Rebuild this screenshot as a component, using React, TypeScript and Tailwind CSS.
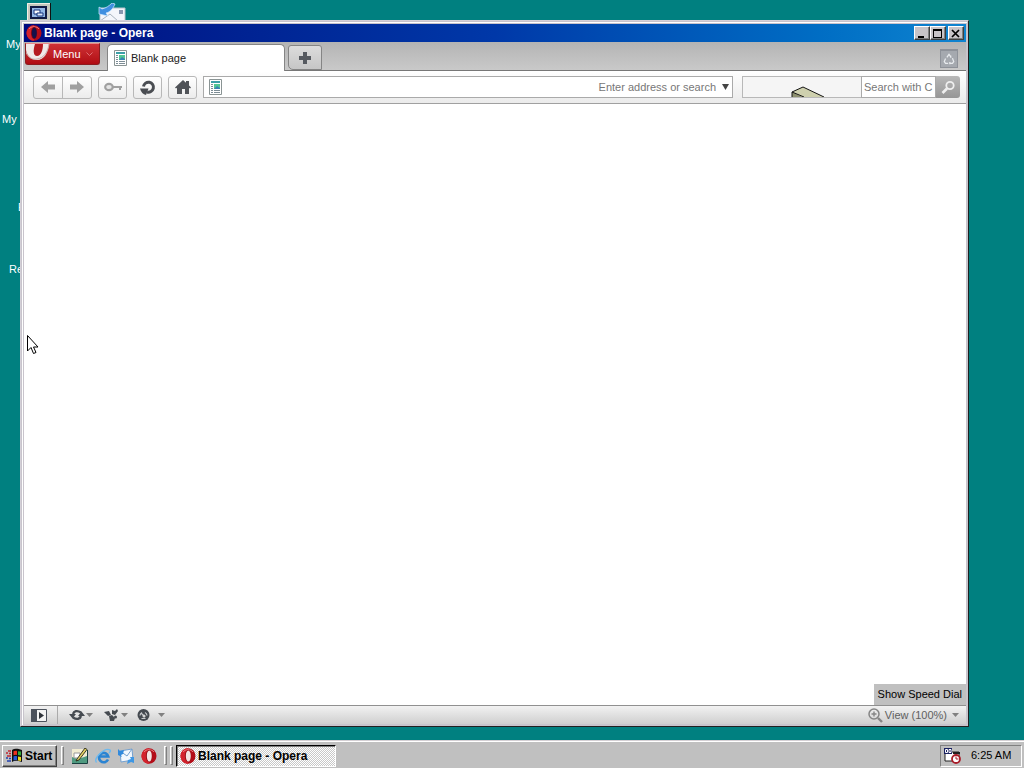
const raised = 'border border-t-white border-l-white border-r-[#404040] border-b-[#404040] shadow-[inset_-1px_-1px_0_#808080]';
const navButton = 'flex h-[23px] w-[29px] items-center justify-center rounded-[3px] border border-[#b8b8b8] bg-linear-to-b from-white to-[#ececec]';

function OperaIcon({ hole = '#f4e4e2' }: { hole?: string }) {
  return (
    <svg width="16" height="16" viewBox="0 0 16 16" className="shrink-0" aria-hidden="true">
      <ellipse cx="8" cy="8" rx="7.500" ry="7.800" fill="#b30d18" />
      <path d="M8 .2C3.900.2.5 3.700.5 8s3.400 7.800 7.500 7.800V.2z" fill="#d3222c" />
      <path d="M3 4c2-3 8-3 10 0" fill="none" stroke="#e8797c" />
      <ellipse cx="8" cy="8" rx="3.100" ry="6" fill="#8d0710" />
      <ellipse cx="8.300" cy="8" rx="2.500" ry="5.600" fill={hole} />
    </svg>
  );
}

function PageIcon() {
  return (
    <svg width="13" height="16" viewBox="0 0 13 16" className="shrink-0" aria-hidden="true">
      <path d="M.5.5h12v15H.5z" fill="#fff" stroke="#8a9494" />
      <path d="M2 2h9v2H2z" fill="#3c9fa8" />
      <path d="M5 5h6v5H5z" fill="#52c795" />
      <path d="M5 10l3-3 3 2v1z" fill="#3984b4" />
      <path d="M2 5.500h2M2 7.500h2M2 9.500h2M2 11.500h2M2 13.500h2M5 11.500h6M5 13.500h6" stroke="#7d8d96" />
    </svg>
  );
}

function Caret({ className = 'text-[#808080]' }: { className?: string }) {
  return (
    <svg width="7" height="4" viewBox="0 0 7 4" className={`shrink-0 ${className}`} aria-hidden="true">
      <path d="M0 0h7L3.500 4z" fill="currentColor" />
    </svg>
  );
}

// the browser window covers all but the left edge of these labels
const shortcuts = [
  { label: 'My', title: 'My Computer', place: 'pt-[38px] pl-[6px]' },
  { label: 'My', title: 'My Documents', place: 'pt-[38px] pl-[2px]' },
  { label: 'E', title: 'Internet Explorer', place: 'pt-[51px] pl-[18px]' },
  { label: 'Re', title: 'Recycle Bin', place: 'pt-[38px] pl-[9px]' },
];

function Desktop() {
  return (
    <div className="flex">
      <div className="w-5">
        {shortcuts.map(s => (
          <a key={s.title} href="#" title={s.title} className={`block h-[75px] overflow-hidden leading-[13px] text-white ${s.place}`}>
            {s.label}
          </a>
        ))}
      </div>
      <svg width="32" height="32" viewBox="0 0 32 32" className="mt-[3px]" aria-hidden="true">
        <path d="M7 0h23v20H7z" fill="#c6c9be" />
        <path d="M7.500 20V.5H30" fill="none" stroke="#eef0e6" />
        <path d="M30.500 0v20" stroke="#111" />
        <path d="M10 3h17v13H10z" fill="#111b45" />
        <path d="M12 5h13v9H12z" fill="#94b8e6" />
        <path d="M14 7h6v4h-6z" fill="#fff" stroke="#16357e" />
        <path d="M17 10h6v3h-6z" fill="#dce9fb" stroke="#16357e" />
      </svg>
      <a href="#" aria-label="Outlook Express" className="ml-11 pt-[3px]">
        <svg width="32" height="32" viewBox="0 0 32 32" aria-hidden="true">
          <path d="M4 5h25v14H4z" fill="#f4f6fb" stroke="#b8c2cc" />
          <path d="M4 18l10-7 8 7" fill="none" stroke="#a9b4c0" />
          <path d="M23 7h4v4h-4z" fill="#8997b0" />
          <path d="M3 11V4l3 2c4-1 7-3 10-6l3 1c-2 5-5 8-9 9l2 3z" fill="#3f8fe0" stroke="#d6ebff" strokeWidth=".7" />
        </svg>
      </a>
    </div>
  );
}

function TitleBar() {
  const control = `flex h-[14px] w-4 items-center justify-center bg-[#c8c4c8] text-black ${raised}`;
  return (
    <header className="flex h-[18px] shrink-0 items-center bg-linear-to-r from-[#000a80] via-[#0038a8] to-[#1084d0] pr-[2px] pl-[2px] text-white">
      <OperaIcon hole="#14104a" />
      <h1 className="ml-[2px] flex-1 text-[12px] leading-[18px] font-bold">Blank page - Opera</h1>
      <button aria-label="Minimize" className={control}>
        <svg width="10" height="9" viewBox="0 0 10 9"><path d="M1 7h6v2H1z" /></svg>
      </button>
      <button aria-label="Maximize" className={control}>
        <svg width="10" height="9" viewBox="0 0 10 9"><path d="M0 0h9v9H0zM1 2v6h7V2z" fillRule="evenodd" /></svg>
      </button>
      <button aria-label="Close" className={`ml-[2px] ${control}`}>
        <svg width="10" height="9" viewBox="0 0 10 9"><path d="M1 1l7 7M8 1L1 8" stroke="currentColor" strokeWidth="1.700" /></svg>
      </button>
    </header>
  );
}

function TabBar() {
  return (
    <div className="flex h-[29px] shrink-0 items-start border-b border-[#777] bg-linear-to-b from-[#b4b4b4] to-[#c9c9c9] pr-2 pl-[1px]">
      <button className="mt-[1px] flex h-[22px] w-[75px] items-center overflow-hidden rounded-b-[3px] border border-[#8c1b1f] border-t-[#e8898b] bg-linear-to-b from-[#cf3035] to-[#b00a12] text-white">
        <svg width="24" height="20" viewBox="0 0 24 20" className="shrink-0" aria-hidden="true">
          <path d="M0 0h23c-1 9-5 16-12 16C5 16 1 12 0 6z" fill="#f0e9e8" />
          <path d="M9 0h8c0 6-2 12-6 12S7 6 9 0z" fill="#b51a20" />
          <path d="M0 8c2 6 7 8 11 7 7-1 11-7 12-15" fill="none" stroke="#c9aaa8" />
        </svg>
        <span className="ml-[3px] flex-1 text-left leading-5">Menu</span>
        <svg width="7" height="4" viewBox="0 0 7 4" className="mr-[6px]" aria-hidden="true">
          <path d="M.5.5l3 3 3-3" fill="none" stroke="#e07074" />
        </svg>
      </button>
      <div className="mt-[2px] ml-[7px] flex h-[27px] w-[178px] items-center gap-1 rounded-t-[5px] border border-b-0 border-[#858585] bg-white pl-[6px] text-[#202020]">
        <PageIcon />
        <span>Blank page</span>
      </div>
      <button aria-label="New tab" className="mt-[3px] ml-[3px] flex h-[25px] w-[34px] items-center justify-center rounded-t-[3px] rounded-bl-[5px] border border-[#858585] bg-linear-to-b from-[#dcdcdc] to-[#c6c6c6]">
        <svg width="12" height="12" viewBox="0 0 12 12"><path d="M4 0h4v4h4v4H8v4H4V8H0V4h4z" fill="#565a60" /></svg>
      </button>
      <button aria-label="Closed tabs" className="mt-[7px] ml-auto flex h-[19px] w-[18px] items-center justify-center border border-t-2 border-[#8e9299] bg-[#a5a9af]">
        <svg width="12" height="12" viewBox="0 0 14 14" fill="none" stroke="#e8ebee" strokeWidth="1.500">
          <path d="M4.500 5L7 1.500 9.500 5M11 6l1.500 4-1.500 2H8M6 12H3l-1.500-2L3 6.500M8 10.500V13M9 3v2.500" />
        </svg>
      </button>
    </div>
  );
}

function Toolbar() {
  return (
    <div className="flex h-[33px] shrink-0 items-center gap-[6px] border-b border-[#a0a0a0] bg-linear-to-b from-white to-[#ebebeb] pr-[6px] pl-[9px]">
      <div className="flex h-[23px] w-[59px] rounded-[3px] border border-[#b8b8b8] bg-linear-to-b from-white to-[#ececec]">
        <button aria-label="Back" className="flex flex-1 items-center justify-center border-r border-[#b8b8b8]">
          <svg width="14" height="12" viewBox="0 0 14 12"><path d="M0 6l7-6v3.500h7v5H7V12z" fill="#a0a0a0" /></svg>
        </button>
        <button aria-label="Forward" className="flex flex-1 items-center justify-center">
          <svg width="14" height="12" viewBox="0 0 14 12"><path d="M14 6L7 0v3.500H0v5h7V12z" fill="#a0a0a0" /></svg>
        </button>
      </div>
      <button aria-label="Wand" className={navButton}>
        <svg width="18" height="10" viewBox="0 0 18 10">
          <path d="M8 4h10v2h-1v2h-2V6H8z" fill="#a0a0a0" />
          <ellipse cx="5" cy="5" rx="3.800" ry="3.200" fill="#e4e4e4" stroke="#a0a0a0" strokeWidth="2.200" />
        </svg>
      </button>
      <button aria-label="Reload" className={navButton}>
        <svg width="18" height="16" viewBox="0 0 18 16">
          <path d="M4.500 7.500A5 5 0 1 1 8 13" fill="none" stroke="#4a4d52" strokeWidth="3" />
          <path d="M1 9.500h8.500L7 16c-3-.5-5-3-6-6.500z" fill="#4a4d52" />
        </svg>
      </button>
      <button aria-label="Home" className={navButton}>
        <svg width="16" height="14" viewBox="0 0 16 14">
          <path d="M8 0l3 2.700V1h3v4.500L16 7.500l-1 1-1-.8V14h-4V9H7v5H2V7.700l-1 .8-1-1z" fill="#505358" />
        </svg>
      </button>
      <div className="flex h-[22px] flex-1 items-center border border-[#aaa] bg-white pr-[3px] pl-[5px]">
        <PageIcon />
        <input aria-label="Address" placeholder="Enter address or search" className="h-5 min-w-0 flex-1 text-right outline-none placeholder:text-[#777]" />
        <button aria-label="Address history" className="ml-[6px] text-[#444]">
          <svg width="7" height="6" viewBox="0 0 7 6"><path d="M0 0h7L3.500 6z" fill="currentColor" /></svg>
        </button>
      </div>
      <div className="ml-[3px] flex h-[22px]">
        <div className="flex w-[119px] items-end justify-center border border-r-0 border-[#b8b8b8] bg-[#f5f5f5] pl-[11px]">
          <svg width="34" height="11" viewBox="0 0 34 11" aria-hidden="true">
            <path d="M1 11V6l11-5 21 10z" fill="#ced0ae" />
            <path d="M1 6l10 5H1z" fill="#8f9270" />
            <path d="M1 11V6l11-5 21 10M1 6l12 5" fill="none" stroke="#151515" />
          </svg>
        </div>
        <input aria-label="Search" placeholder="Search with C" className="w-[75px] border border-[#aaa] bg-white pl-[2px] outline-none placeholder:text-[#777]" />
        <button aria-label="Go" className="flex w-6 items-center justify-center rounded-r-[3px] bg-linear-to-b from-[#b8b8b8] to-[#969696]">
          <svg width="15" height="15" viewBox="0 0 15 15" fill="none" stroke="#efefef">
            <circle cx="9" cy="5.500" r="3.700" strokeWidth="1.800" />
            <path d="M6 8.500L1.500 13" strokeWidth="2.600" />
          </svg>
        </button>
      </div>
    </div>
  );
}

function StatusBar() {
  return (
    <footer className="flex h-[19px] shrink-0 items-center border-t border-[#909090] bg-linear-to-b from-[#f2f2f2] to-[#cfcfcf] pr-[7px] text-[#606060]">
      <button aria-label="Panels" className="flex h-[18px] w-[34px] items-center border-r border-[#aaa] pl-[7px]">
        <svg width="16" height="13" viewBox="0 0 16 13">
          <path d="M.5.500h15v12H.500z" fill="#f4f4f4" stroke="#4c525c" />
          <path d="M0 0h6v13H0z" fill="#4c525c" />
          <path d="M8 3l5 3.500L8 10z" fill="#30343a" />
        </svg>
      </button>
      <button aria-label="Synchronize" className="ml-[11px] flex w-6 items-center gap-[1px]">
        <svg width="16" height="12" viewBox="0 0 16 12">
          <path d="M4 5C5 2 8 1 12 3.500M12 7C11 10 8 11 4 8.500" fill="none" stroke="#454a50" strokeWidth="2.400" />
          <path d="M0 5h7L3.500 9.500zM9 7h7l-3.500-4.500z" fill="#454a50" />
        </svg>
        <Caret />
      </button>
      <button aria-label="Unite" className="ml-[11px] flex w-6 items-center gap-[2px]">
        <svg width="15" height="12" viewBox="0 0 15 12" fill="#454a50">
          <path d="M0 3l5-1 2 4-3 1z" />
          <path d="M8 1l3 1 2-2 1 2-3 4-3-1z" />
          <path d="M5 7l3-1 3 3-1 3H6z" />
          <circle cx="11.500" cy="8" r="1.500" />
        </svg>
        <Caret />
      </button>
      <button aria-label="Turbo" className="ml-[9px] flex items-center gap-2">
        <svg width="13" height="12" viewBox="0 0 13 12">
          <circle cx="6.500" cy="6" r="6" fill="#454a50" />
          <path d="M3 6.500a3.500 3.500 0 0 1 2-3M8 3.500a3.500 3.500 0 0 1 2 3M4 4l4 4M4.500 9.500h4" fill="none" stroke="#c8cacc" strokeWidth="1.200" />
          <circle cx="7" cy="7" r="1.500" fill="#d4d4d4" />
        </svg>
        <Caret />
      </button>
      <button className="ml-auto flex items-center">
        <svg width="15" height="15" viewBox="0 0 15 15" fill="none" stroke="#858585" aria-hidden="true">
          <circle cx="6" cy="6" r="5" strokeWidth="1.500" />
          <path d="M3.500 6h5M6 3.500v5" strokeWidth="1.400" />
          <path d="M10 10l4 4" strokeWidth="2.400" />
        </svg>
        <span className="mr-[5px] ml-[2px] leading-[18px]">View (100%)</span>
        <Caret />
      </button>
    </footer>
  );
}

function BrowserWindow() {
  return (
    <section className="absolute top-5 right-[55px] bottom-[13px] left-5 flex flex-col border border-t-[#d4d0d8] border-r-[#202020] border-b-[#202020] border-l-[#d4d0d8] bg-[#c8c4cc] p-[1px]">
      <div className="flex flex-1 flex-col border-t border-l border-white pt-[1px] pr-[1px] pb-[1px] pl-[1px]">
        <TitleBar />
        <TabBar />
        <Toolbar />
        <main className="relative flex-1 bg-white">
          <div role="tooltip" className="absolute right-0 bottom-0 h-[21px] bg-[#c0c0c0] px-[4px] leading-[20px] text-black">Show Speed Dial</div>
        </main>
        <StatusBar />
      </div>
    </section>
  );
}

function Grip() {
  return <span className="h-[19px] w-[3px] border border-t-white border-l-white border-r-[#808080] border-b-[#808080]" />;
}

function Taskbar() {
  return (
    <nav className="flex h-7 shrink-0 items-center border-t border-[#d4d0d4] bg-[#c0c0c0] pt-[2px] pr-[2px] pl-[2px] text-black shadow-[inset_0_1px_0_#fff]">
      <button className={`flex h-[22px] w-[55px] items-center gap-[2px] pl-[3px] text-[12px] font-bold ${raised}`}>
        <svg width="17" height="15" viewBox="0 0 17 15" className="shrink-0" aria-hidden="true">
          <path d="M6 2c3-2 6-1 10 0v12c-4-1-7-2-10 0z" fill="#111" />
          <path d="M7.500 3.200C9 2.500 10 2.500 11 3v4c-1-.5-2-.5-3.500.2z" fill="#f03020" />
          <path d="M12 3.200l3 .3v4l-3-.5z" fill="#2fae3c" />
          <path d="M7.500 8.500C9 8 10 8 11 8.300v4c-1-.5-2-.5-3.500.2z" fill="#2659d8" />
          <path d="M12 8.500l3 .5v4l-3-.6z" fill="#f0d820" />
          <path d="M2 3h3M0 5h2M3 5.500h2M1 8h4" stroke="#c02830" strokeWidth="1.500" />
          <path d="M0 10h2M3 10.500h2M1 13h4" stroke="#2040b0" strokeWidth="1.500" />
        </svg>
        Start
      </button>
      <div className="ml-1 flex gap-[7px]">
        <Grip />
        <div className="flex items-center gap-[7px]">
          <a href="#" aria-label="Show desktop">
            <svg width="17" height="16" viewBox="0 0 17 16">
              <path d="M1 1h15v14H1z" fill="#f1ecd2" />
              <path d="M1 15V9l6 2 9-3v7z" fill="#4f9a80" />
              <path d="M1 15.500h15.500V2" fill="none" stroke="#184040" />
              <path d="M3 5h6v5H3z" fill="#fff" stroke="#999" />
              <path d="M6 11l8-11 2 1.500L8 12l-3 1z" fill="#dfce62" stroke="#282818" strokeWidth=".9" />
            </svg>
          </a>
          <a href="#" aria-label="Internet Explorer">
            <svg width="16" height="16" viewBox="0 0 16 16" fill="none">
              <path d="M13 11.500A4.700 4.700 0 1 1 13.300 8.500H5" stroke="#2b84d2" strokeWidth="2.600" />
              <path d="M1.500 14.500C-2 10 10-1 15 2c1 1 0 2-1 3" stroke="#6db9ef" strokeWidth="1.400" />
            </svg>
          </a>
          <a href="#" aria-label="Outlook Express">
            <svg width="16" height="16" viewBox="0 0 16 16">
              <path d="M2 3l12-2 1 11-12 2z" fill="#f2f7fd" stroke="#73a0d0" />
              <path d="M2 3l7 5 5-7" fill="none" stroke="#73a0d0" />
              <path d="M0 7V1l2 2 4-1-1 4-2 1 1 2z" fill="#3189dc" />
              <path d="M16 9v6l-3-1-4 2 1-4 3-1-1-2z" fill="#3f97e4" />
            </svg>
          </a>
          <a href="#" aria-label="Opera"><OperaIcon /></a>
        </div>
        <div className="flex gap-[3px]">
          <Grip />
          <Grip />
        </div>
      </div>
      <button className="ml-[3px] flex h-[22px] w-40 items-center gap-[2px] border border-t-black border-r-white border-b-white border-l-black bg-[repeating-conic-gradient(#ffffff_0_25%,#c8c8c8_0_50%)] bg-size-[2px_2px] pl-[3px] text-[12px] font-bold shadow-[inset_1px_1px_0_#808080]">
        <OperaIcon />
        Blank page - Opera
      </button>
      <div className="ml-auto flex h-[22px] w-[82px] items-center border border-t-[#808080] border-r-white border-b-white border-l-[#808080] pl-[3px]">
        <svg width="17" height="16" viewBox="0 0 17 16" aria-hidden="true">
          <path d="M1 4h14v9H1z" fill="#fff" stroke="#222" />
          <path d="M0 0h8v6H0z" fill="#182060" />
          <path d="M1.500 1.500h2v3h-2zM5 1.500h2v3H5z" fill="none" stroke="#fff" />
          <path d="M9 4h7v2H9z" fill="#202020" />
          <circle cx="12" cy="11" r="4" fill="#fff" stroke="#a81c28" strokeWidth="1.800" />
          <path d="M12 8.500V11h2.500" fill="none" stroke="#a81c28" />
        </svg>
        <time className="ml-[10px]">6:25 AM</time>
      </div>
    </nav>
  );
}

export default function App() {
  return (
    <div className="flex h-screen flex-col overflow-hidden bg-[#008080] font-['Liberation_Sans',Arial,sans-serif] text-[11px]">
      <div className="relative min-h-0 flex-1">
        <Desktop />
        <BrowserWindow />
        <svg width="12" height="20" viewBox="0 0 12 20" className="absolute top-[335px] left-[27px]" aria-hidden="true">
          <path d="M.5.500v15.500l3.500-3.500 2.500 6 2.500-1-2.500-5.500h4.500z" fill="#fff" stroke="#000" />
        </svg>
      </div>
      <Taskbar />
    </div>
  );
}
